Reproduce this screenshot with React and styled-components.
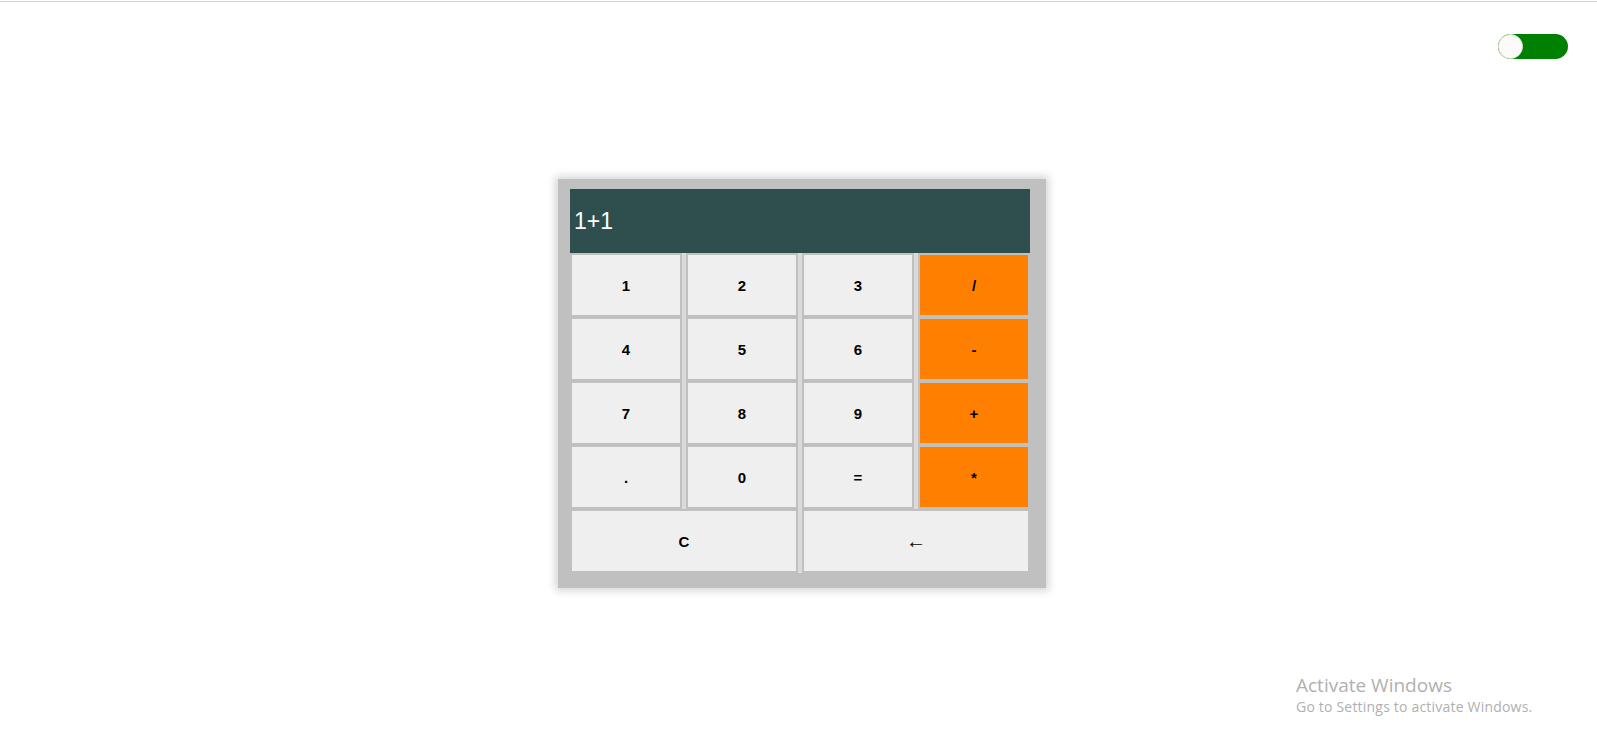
import styled, { createGlobalStyle } from "styled-components";

const GlobalStyle = createGlobalStyle`
    body {
        margin: 0;
        background: #fff;
        font-family: "Liberation Sans", Arial, sans-serif;
    }
`

const Page = styled.div`
    min-height: 100vh;
    position: relative;
`

const TopRule = styled.div`
    margin-top: 1px;
    height: 1px;
    background: #d3d3d3;
`

const Header = styled.div`
    display: flex;
    justify-content: flex-end;
    padding: 32px 29px 0 0;
`

const Toggle = styled.div`
    width: 70px;
    height: 25px;
    border-radius: 13px;
    background: ${props => props.on ? "#008000" : "#ccc"};
    display: flex;
    justify-content: ${props => props.on ? "flex-start" : "flex-end"};
`

const Knob = styled.div`
    width: 25px;
    height: 25px;
    box-sizing: border-box;
    border-radius: 50%;
    background: #fffafa;
    border: 1px solid #d8e6d8;
`

const Main = styled.div`
    display: flex;
    justify-content: center;
    padding-top: 120px;
`

const Calculator = styled.div`
    margin-left: 7px;
    background: #c0c0c0;
    padding: 10px 16px 17px 12px;
    box-shadow: 0 0 8px 3px rgba(0, 0, 0, 0.16);
`

const Display = styled.div`
    width: 460px;
    height: 64px;
    box-sizing: border-box;
    background: #2f4f4f;
    color: #fff;
    font-size: 23px;
    padding-left: 4px;
    display: flex;
    align-items: center;
`

const Keypad = styled.div`
    display: grid;
    grid-template-columns: 108px 8px 108px 8px 108px 8px 108px;
    grid-auto-rows: 60px;
    row-gap: 4px;
    padding: 2px 2px 0;
`

const Divider = styled.div`
    grid-column: ${props => props.col};
    grid-row: 1 / span ${props => props.rows};
    justify-self: center;
    width: 4px;
    margin: -2px 0 -2px;
    background: #dadada;
`

const Key = styled.button`
    grid-column: ${props => props.span};
    border: none;
    margin: 0;
    padding: 0;
    background: ${props => props.op ? "#ff8000" : "#efefef"};
    color: #000;
    font-family: "Liberation Sans", Arial, sans-serif;
    font-size: ${props => props.thin ? "20px" : "15px"};
    font-weight: ${props => props.thin ? "normal" : "bold"};
    cursor: pointer;
`

const Watermark = styled.div`
    position: absolute;
    left: 1296px;
    top: 672px;
    color: #b0b0b0;
    font-family: "Open Sans", sans-serif;
`

const WatermarkTitle = styled.div`
    font-size: 19px;
    line-height: 24px;
`

const WatermarkText = styled.div`
    font-size: 14px;
    line-height: 19px;
    letter-spacing: 0.2px;
`

const rows = [
    ["1", "2", "3", "/"],
    ["4", "5", "6", "-"],
    ["7", "8", "9", "+"],
    [".", "0", "=", "*"],
]

const App = () => {
    return (
        <Page>
            <GlobalStyle />
            <TopRule />
            <Header>
                <Toggle on>
                    <Knob />
                </Toggle>
            </Header>
            <Main>
                <Calculator>
                    <Display>1+1</Display>
                    <Keypad>
                        <Divider col={2} rows={4} />
                        <Divider col={4} rows={5} />
                        <Divider col={6} rows={4} />
                        {rows.map((row, r) =>
                            row.map((label, c) => (
                                <Key
                                    key={label}
                                    op={c === 3}
                                    span={`${c * 2 + 1}`}
                                    style={{ gridRow: r + 1 }}
                                >
                                    {label}
                                </Key>
                            ))
                        )}
                        <Key span="1 / 4" style={{ gridRow: 5 }}>C</Key>
                        <Key span="5 / 8" thin style={{ gridRow: 5 }}>←</Key>
                    </Keypad>
                </Calculator>
            </Main>
            <Watermark>
                <WatermarkTitle>Activate Windows</WatermarkTitle>
                <WatermarkText>Go to Settings to activate Windows.</WatermarkText>
            </Watermark>
        </Page>
    )
}

export default App;
